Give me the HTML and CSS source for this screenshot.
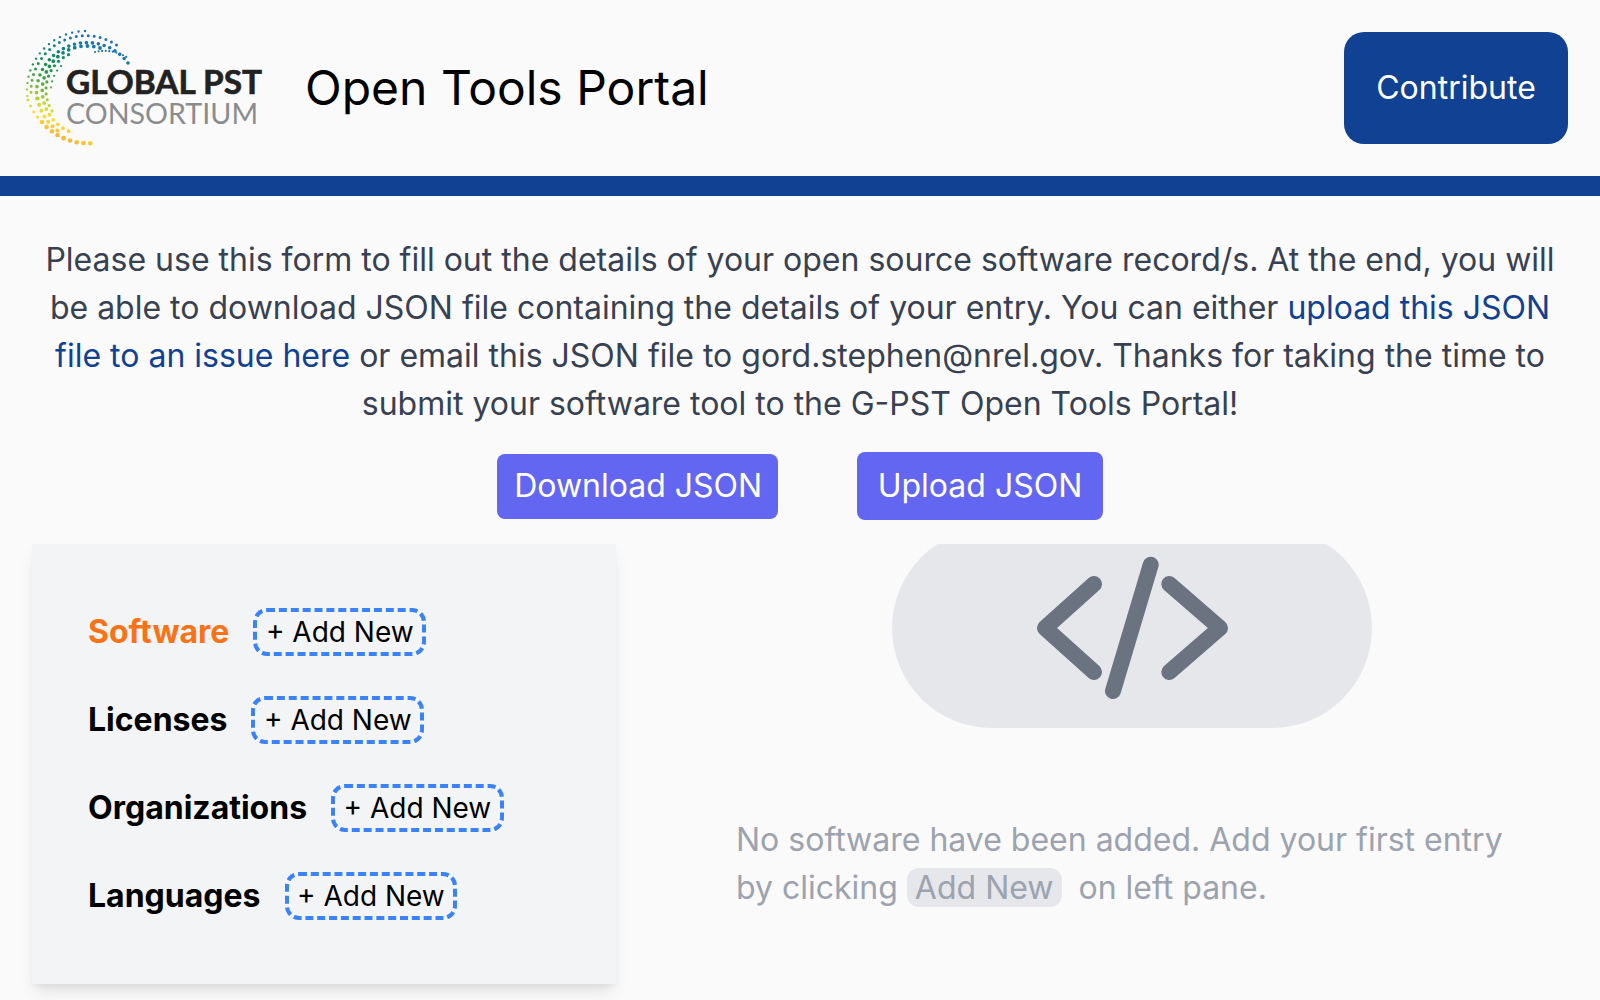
FILE: index.html
```html
<!DOCTYPE html>
<html lang="en">
<head>
    <meta charset="UTF-8">
    <meta name="viewport" content="width=device-width, initial-scale=1.0">
    <title>Open Tools Portal</title>
    <link rel="stylesheet" href="styles.css">
</head>
<body>
    <header class="site-header">
        <div class="brand">
            <svg class="logo" width="270" height="120" viewBox="24 28 270 120" role="img" aria-label="Global PST Consortium">
                <defs>
                    <linearGradient id="swirl" gradientUnits="userSpaceOnUse" x1="118" y1="36" x2="72" y2="144">
                        <stop offset="0.1" stop-color="#1c70bd"/>
                        <stop offset="0.26" stop-color="#12808f"/>
                        <stop offset="0.4" stop-color="#158a5c"/>
                        <stop offset="0.54" stop-color="#2c9a48"/>
                        <stop offset="0.67" stop-color="#7ab83d"/>
                        <stop offset="0.78" stop-color="#c9d92f"/>
                        <stop offset="0.87" stop-color="#fbe034"/>
                        <stop offset="1" stop-color="#fbb034"/>
                    </linearGradient>
                </defs>
                <g class="swirl">
                    <!-- dotted rows, outer to inner -->
                    <path stroke-width="2.4" stroke-dasharray="0 6.5" d="M85 31A59 59 0 0 0 27.6 98.2"/>
                    <path stroke-width="3" stroke-dasharray="0 6.5" d="M28 100A60 60 0 0 0 42 122"/>
                    <path stroke-width="4.6" stroke-dasharray="0 6.8" d="M42 122A60 60 0 0 0 93 143"/>
                    <path stroke-width="3" stroke-dasharray="0 6" d="M116.5 44.9A55 55 0 0 0 31.2 94.8"/>
                    <path stroke-width="3.6" stroke-dasharray="0 6" d="M128 63A50.8 50.8 0 0 0 36.8 98.7"/>
                    <path stroke-width="4" stroke-dasharray="0 6.4" d="M37.7 98.5A49 49 0 0 0 60.5 132.4"/>
                    <path stroke-width="3.8" stroke-dasharray="0 6.4" d="M100 48A44.5 44.5 0 0 0 73.5 133"/>
                    <path stroke-width="3.2" stroke-dasharray="0 6" d="M68.5 54.7A39 39 0 0 0 55 115"/>
                    <path stroke-width="2.2" stroke-dasharray="0 6" d="M61 66A34 34 0 0 0 51 90"/>
                    <path stroke-width="2.2" stroke-dasharray="0 3.6" d="M95 52Q112 48 128 58"/>
                </g>
                <text class="logo-top" x="66" y="94" textLength="196" lengthAdjust="spacingAndGlyphs">GLOBAL PST</text>
                <text class="logo-bottom" x="66" y="124" textLength="192" lengthAdjust="spacingAndGlyphs">CONSORTIUM</text>
            </svg>
            <h1 class="site-title">Open Tools Portal</h1>
        </div>
        <a class="contribute-btn" href="#">Contribute</a>
    </header>

    <p class="intro">
        Please use this form to fill out the details of your open source software record/s. At the end, you will
        be able to download JSON file containing the details of your entry. You can either
        <a href="#">upload this JSON file to an issue here</a> or email this JSON file to gord.stephen@nrel.gov.
        Thanks for taking the time to submit your software tool to the G-PST Open Tools Portal!
    </p>

    <div class="json-actions">
        <button class="json-btn download-btn">Download JSON</button>
        <button class="json-btn upload-btn">Upload JSON</button>
    </div>

    <main class="panes">
        <nav class="side-pane">
            <div class="side-row">
                <span class="side-label active">Software</span>
                <button class="add-btn">+ Add New</button>
            </div>
            <div class="side-row">
                <span class="side-label">Licenses</span>
                <button class="add-btn">+ Add New</button>
            </div>
            <div class="side-row">
                <span class="side-label">Organizations</span>
                <button class="add-btn">+ Add New</button>
            </div>
            <div class="side-row">
                <span class="side-label">Languages</span>
                <button class="add-btn">+ Add New</button>
            </div>
        </nav>

        <section class="empty-pane">
            <div class="code-pill">
                <svg width="192" height="144" viewBox="-96 -72 192 144">
                    <path d="M-38 -44L-87 0L-38 44M-19 63L18.7 -63.3M37.3 -44L88 0L37.3 44"/>
                </svg>
            </div>
            <p class="empty-text">
                No software have been added. Add your first entry by clicking
                <span class="chip">Add New</span> on left pane.
            </p>
        </section>
    </main>
</body>
</html>
```

FILE: styles.css
```css
* {
    box-sizing: border-box;
}
html, body {
    height: 1000px;
    overflow: hidden;
}
body {
    margin: 0;
    background-color: #fafafa;
    font-family: Inter, "Liberation Sans", sans-serif;
    font-size: 32px;
    line-height: 48px;
}
.site-header {
    display: flex;
    align-items: center;
    justify-content: space-between;
    height: 196px;
    padding: 0 32px 0 24px;
    border-bottom: 20px solid #114192;
}
.brand {
    display: flex;
    align-items: center;
}
.logo {
    display: block;
    margin-right: 11px;
}
.swirl path {
    fill: none;
    stroke: url(#swirl);
    stroke-linecap: round;
}
.logo-top {
    font-family: Lato, sans-serif;
    font-weight: 700;
    font-size: 33px;
    fill: #222222;
    stroke: #222222;
    stroke-width: 0.6;
}
.logo-bottom {
    font-family: Lato, sans-serif;
    font-weight: 400;
    font-size: 28px;
    fill: #8a8c8e;
}
.site-title {
    margin: 0;
    font-size: 48px;
    line-height: 60px;
    font-weight: 400;
    color: #000000;
}
.contribute-btn {
    display: flex;
    align-items: center;
    justify-content: center;
    width: 224px;
    height: 112px;
    border-radius: 20px;
    background-color: #114192;
    color: #ffffff;
    text-decoration: none;
}
.intro {
    margin: 40px 0 0;
    padding: 0 40px;
    text-align: center;
    color: #374151;
}
.intro a {
    color: #114192;
    text-decoration: none;
}
.json-actions {
    display: flex;
    align-items: center;
    justify-content: center;
    gap: 79px;
    margin-top: 24px;
    height: 68px;
}
.json-btn {
    border: none;
    border-radius: 8px;
    background-color: #6366f1;
    color: #ffffff;
    font: inherit;
}
.download-btn {
    height: 65px;
    padding: 0 16px 0 17px;
}
.upload-btn {
    height: 68px;
    padding: 0 20.5px;
}
.panes {
    display: flex;
    align-items: flex-start;
    margin-top: 24px;
    padding-left: 32px;
}
.side-pane {
    flex: none;
    display: flex;
    flex-direction: column;
    gap: 40px;
    width: 584px;
    height: 440px;
    padding: 64px 56px;
    background-color: #f3f4f6;
    box-shadow: 0 10px 15px -3px rgba(0, 0, 0, 0.1), 0 4px 6px -2px rgba(0, 0, 0, 0.05);
}
.side-row {
    display: flex;
    align-items: center;
    gap: 24px;
    height: 48px;
}
.side-label {
    font-weight: 700;
    color: #000000;
}
.side-label.active {
    color: #f97316;
}
.add-btn {
    height: 48px;
    padding: 0 8.5px;
    border: 4px dashed #3b82f6;
    border-radius: 14px;
    background: none;
    color: #000000;
    font: inherit;
    font-size: 28px;
    line-height: 40px;
}
.empty-pane {
    flex: 1;
    display: flex;
    flex-direction: column;
    align-items: center;
    margin-left: 48px;
    height: 440px;
    overflow: hidden;
}
.code-pill {
    display: flex;
    align-items: center;
    justify-content: center;
    flex: none;
    width: 480px;
    height: 200px;
    margin-top: -16px;
    border-radius: 100px;
    background-color: #e5e7eb;
}
.code-pill path {
    fill: none;
    stroke: #6b7280;
    stroke-width: 16;
    stroke-linecap: round;
    stroke-linejoin: round;
}
.empty-text {
    width: 792px;
    margin: 88px 0 0;
    color: #9ca3af;
}
.chip {
    display: inline-block;
    height: 39px;
    line-height: 39px;
    padding: 0 8px;
    margin-right: 8px;
    border-radius: 12px;
    background-color: #e5e7eb;
}
```
